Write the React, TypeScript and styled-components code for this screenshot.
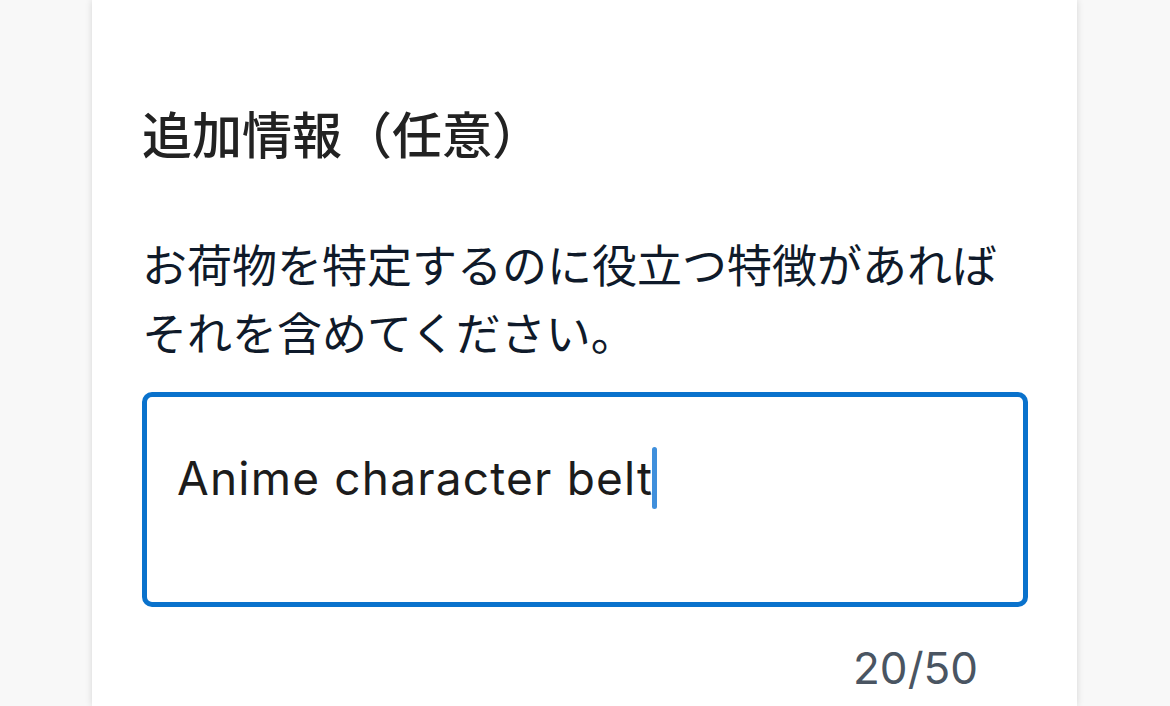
import React from 'react';
import styled, { createGlobalStyle } from 'styled-components';

const GlobalStyle = createGlobalStyle`
  html, body {
    margin: 0;
    padding: 0;
    background: #f8f8f8;
    overflow: hidden;
  }
`;

const Page = styled.div`
  height: 706px;
  padding-left: 92px;
  display: flex;
`;

const Card = styled.section`
  width: 985px;
  height: 100%;
  background: #ffffff;
  box-shadow: 0 0 7px rgba(0, 0, 0, 0.14);
  padding: 100px 50px 0 50px;
  box-sizing: border-box;
  display: flex;
  flex-direction: column;
  font-family: 'Noto Sans CJK JP', 'Noto Sans', sans-serif;
`;

const Title = styled.h2`
  margin: 0;
  font-size: 50px;
  line-height: 64px;
  font-weight: 500;
  color: #222222;
`;

const Hint = styled.p`
  margin: 66px 0 0 0;
  font-size: 45px;
  line-height: 68px;
  font-weight: 400;
  color: #0f1a2a;
`;

const Field = styled.div`
  margin-top: 26px;
  width: 886px;
  height: 215px;
  box-sizing: border-box;
  border: 5px solid #0a72cc;
  border-radius: 10px;
  padding: 50px 31px 0 30px;
  font-family: Inter, 'Noto Sans', sans-serif;
  font-size: 46px;
  letter-spacing: 1.2px;
  line-height: 62px;
  color: #1c1c1c;
  display: flex;
  align-items: flex-start;
`;

const Caret = styled.span`
  display: inline-block;
  width: 5px;
  height: 62px;
  margin-left: -1px;
  border-radius: 3px;
  background: #3f8fdc;
`;

const Counter = styled.div`
  margin-top: 35px;
  width: 886px;
  padding-right: 50px;
  box-sizing: border-box;
  text-align: right;
  font-family: Inter, 'Noto Sans', sans-serif;
  font-size: 44px;
  line-height: 52px;
  color: #4a5562;
`;

export default function App() {
  const value = 'Anime character belt';
  return (
    <>
      <GlobalStyle />
      <Page>
        <Card>
          <Title>追加情報（任意）</Title>
          <Hint>
            お荷物を特定するのに役立つ特徴があれば
            <br />
            それを含めてください。
          </Hint>
          <Field>
            <span>{value}</span>
            <Caret />
          </Field>
          <Counter>{value.length}/50</Counter>
        </Card>
      </Page>
    </>
  );
}
